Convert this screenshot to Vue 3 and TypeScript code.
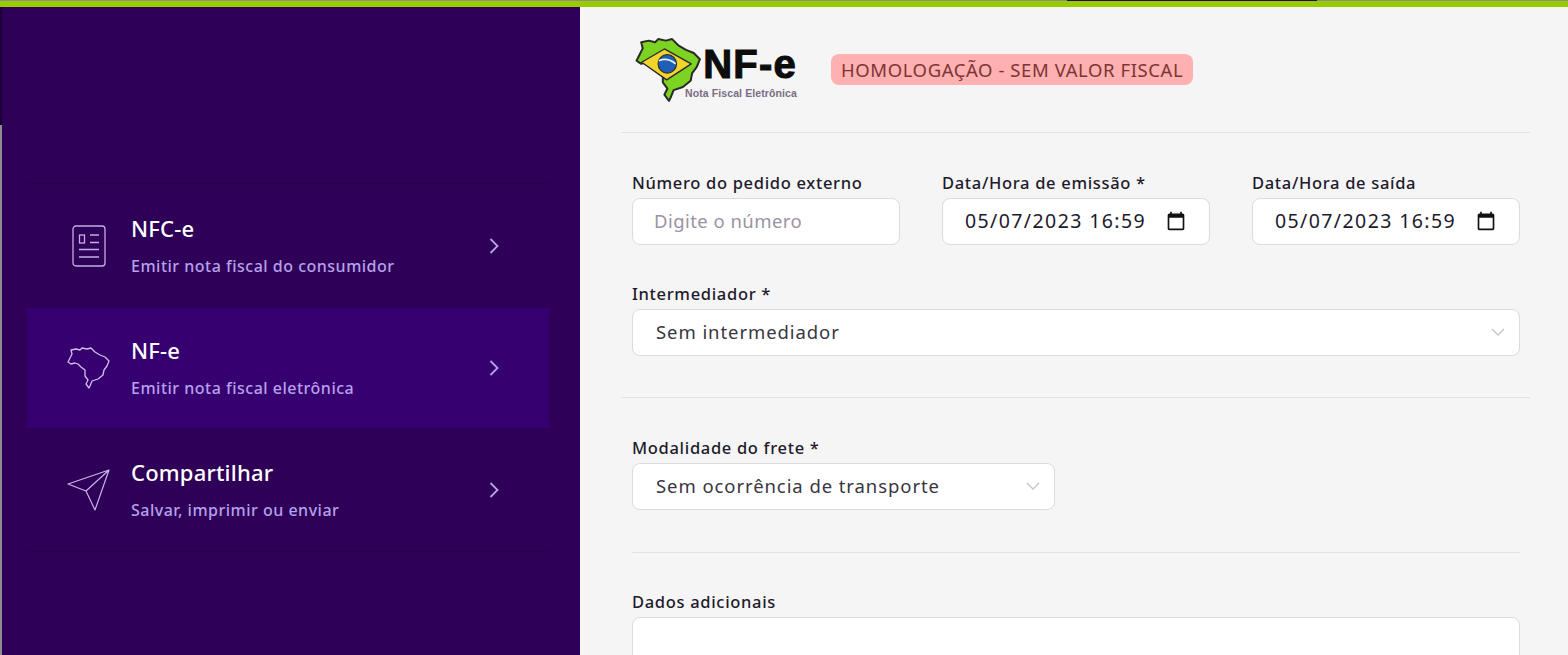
<script setup lang="ts">
interface NavItem {
  title: string;
  sub: string;
  icon: "doc" | "map" | "send";
  active?: boolean;
}

const navItems: NavItem[] = [
  { title: "NFC-e", sub: "Emitir nota fiscal do consumidor", icon: "doc" },
  { title: "NF-e", sub: "Emitir nota fiscal eletrônica", icon: "map", active: true },
  { title: "Compartilhar", sub: "Salvar, imprimir ou enviar", icon: "send" },
];

const brazil =
  "M1 16 L3 12 L5 8 L4 4 L9 3 L13 4 L15 2 L20 3 L24 2 L28 6 L33 9 L38 11 L42 15 L40 20 L37 24 L36 29 L31 33 L25 35 L23 40 L22 42 L19 38 L21 34 L18 30 L18 24 L14 21 L11 18 L8 17 L4 18 Z";
</script>

<template>
  <div class="page">
    <div class="top-strip"><span class="top-strip__seg" /></div>
    <div class="top-bar" />
    <div class="layout">
      <div class="edge"><span class="edge__dark" /></div>

      <aside class="sidebar">
        <nav class="nav">
          <a v-for="item in navItems" :key="item.title" :class="['nav__item', { 'nav__item--active': item.active }]">
            <span class="nav__icon">
              <svg v-if="item.icon === 'doc'" width="34" height="42" viewBox="0 0 34 42" fill="none" stroke="#c3aee6" stroke-width="1.3">
                <rect x="1" y="1" width="32" height="40" rx="3" />
                <rect x="7.5" y="10" width="5" height="8" />
                <path d="M18 10h9M18 17.5h9M7 24.500h20M7 32h20" />
              </svg>
              <svg v-else-if="item.icon === 'map'" width="44" height="44" viewBox="0 0 44 44" fill="none" stroke="#d0bdec" stroke-width="1.3" stroke-linejoin="round">
                <path :d="brazil" />
              </svg>
              <svg v-else width="44" height="44" viewBox="0 0 44 44" fill="none" stroke="#c9b6ea" stroke-width="1.2" stroke-linejoin="round">
                <path d="M42 2 L1 16 L19 23 L28 42 Z M42 2 L19 23" />
              </svg>
            </span>
            <span class="nav__text">
              <span class="nav__title">{{ item.title }}</span>
              <span class="nav__sub">{{ item.sub }}</span>
            </span>
            <svg class="nav__chevron" width="10" height="16" viewBox="0 0 10 16" fill="none" stroke="#b9a3e6" stroke-width="1.8">
              <path d="M1.500 1 L8.500 8 L1.500 15" />
            </svg>
          </a>
        </nav>
      </aside>

      <main class="main">
        <header class="head">
          <div class="logo">
            <svg class="logo__map" width="68" height="68" viewBox="0 0 44 44" stroke-linejoin="round">
              <path :d="brazil" fill="#7dd321" stroke="#2a2a2a" stroke-width="1.300" />
              <path d="M4.300 17 L19 8.400 L36.400 18 L20.500 28.400 Z" fill="#f2d42c" stroke="#2a2a2a" stroke-width="0.900" />
              <circle cx="20.900" cy="18" r="6" fill="#1e5fb4" stroke="#2a2a2a" stroke-width="0.700" />
              <path d="M15.500 16 Q21 13.500 26.300 18" fill="none" stroke="#e8f0ff" stroke-width="1" />
            </svg>
            <div class="logo__text">
              <span class="logo__name">NF-e</span>
              <span class="logo__sub">Nota Fiscal Eletrônica</span>
            </div>
          </div>
          <span class="badge">HOMOLOGAÇÃO - SEM VALOR FISCAL</span>
        </header>

        <section class="form-section form-section--first">
          <div class="row-3">
            <label class="field">
              <span class="field__label">Número do pedido externo</span>
              <span class="control control--placeholder">Digite o número</span>
            </label>
            <label class="field">
              <span class="field__label">Data/Hora de emissão *</span>
              <span class="control control--date">
                05/07/2023 16:59
                <svg class="calendar" width="20" height="20" viewBox="0 0 24 24" fill="#111">
                  <path d="M20 3h-1V1h-2v2H7V1H5v2H4c-1.100 0-2 .9-2 2v16c0 1.100.9 2 2 2h16c1.100 0 2-.9 2-2V5c0-1.100-.9-2-2-2zm0 18H4V8h16v13z" />
                </svg>
              </span>
            </label>
            <label class="field">
              <span class="field__label">Data/Hora de saída</span>
              <span class="control control--date">
                05/07/2023 16:59
                <svg class="calendar" width="20" height="20" viewBox="0 0 24 24" fill="#111">
                  <path d="M20 3h-1V1h-2v2H7V1H5v2H4c-1.100 0-2 .9-2 2v16c0 1.100.9 2 2 2h16c1.100 0 2-.9 2-2V5c0-1.100-.9-2-2-2zm0 18H4V8h16v13z" />
                </svg>
              </span>
            </label>
          </div>
          <label class="field field--gap">
            <span class="field__label">Intermediador *</span>
            <span class="control control--select">
              Sem intermediador
              <svg class="caret" width="14" height="8" viewBox="0 0 14 8" fill="none" stroke="#c4c4c4" stroke-width="1.300"><path d="M1 1l6 6 6-6" /></svg>
            </span>
          </label>
        </section>

        <hr class="rule rule--wide" />

        <section class="form-section form-section--freight">
          <label class="field field--half">
            <span class="field__label">Modalidade do frete *</span>
            <span class="control control--select">
              Sem ocorrência de transporte
              <svg class="caret" width="14" height="8" viewBox="0 0 14 8" fill="none" stroke="#c4c4c4" stroke-width="1.300"><path d="M1 1l6 6 6-6" /></svg>
            </span>
          </label>
        </section>

        <hr class="rule" />

        <section class="form-section form-section--notes">
          <label class="field">
            <span class="field__label">Dados adicionais</span>
            <span class="control control--area" />
          </label>
        </section>
      </main>
    </div>
  </div>
</template>

<style>
html,
body {
  overflow: hidden;
}
</style>

<style scoped>
.page {
  display: flex;
  flex-direction: column;
  width: 1568px;
  height: 655px;
  overflow: hidden;
  color: #1f1a2b;
  font-family: "Noto Sans", "Open Sans", sans-serif;
  background: #f5f5f5;
}

.top-strip {
  height: 1px;
  padding-left: 1067px;
  background: #8e8e8e;
}

.top-strip__seg {
  display: block;
  width: 250px;
  height: 1px;
  background: #2e0057;
}

.top-bar {
  height: 6px;
  background: #99cc00;
}

.layout {
  display: flex;
  flex: 1;
  min-height: 0;
}

.edge {
  width: 2px;
  background: #8e8e8e;
}

.edge__dark {
  display: block;
  height: 118px;
  background: #1a0033;
}

.sidebar {
  box-sizing: border-box;
  width: 578px;
  padding: 176px 31px 0 25px;
  background: #2e0057;
}

.nav {
  display: flex;
  flex-direction: column;
  gap: 2px;
  border-top: 1px solid #270049;
  border-bottom: 1px solid #270049;
  padding: 2px 0 1px;
}

.nav__item {
  display: flex;
  align-items: center;
  height: 120px;
  padding: 0 50px 0 40px;
  color: #fff;
}

.nav__item--active {
  background: #370070;
}

.nav__icon {
  display: flex;
  justify-content: center;
  width: 44px;
  margin-right: 20px;
  flex: none;
}

.nav__text {
  display: flex;
  flex: 1;
  flex-direction: column;
  gap: 13px;
}

.nav__title {
  font-size: 22px;
  font-weight: 500;
  line-height: 27px;
  letter-spacing: 0.2px;
}

.nav__sub {
  color: #b7a0ec;
  font-size: 16px;
  font-weight: 500;
  line-height: 22px;
  letter-spacing: 0.5px;
}

.main {
  flex: 1;
  min-width: 0;
  padding: 0 38px 0 41px;
}

.head {
  display: flex;
  align-items: center;
  height: 125px;
  padding: 0 0 0 14px;
  border-bottom: 1px solid #e2e2e2;
}

.logo {
  display: flex;
  align-items: flex-start;
  width: 196px;
}

.logo__map {
  flex: none;
}

.logo__text {
  display: flex;
  flex-direction: column;
  margin-top: 6px;
  margin-left: -18px;
  align-items: flex-end;
}

.logo__name {
  color: #0c0c0c;
  font-family: "Liberation Sans", sans-serif;
  font-size: 40px;
  font-weight: 700;
  line-height: 45px;
  letter-spacing: 1.2px;
  -webkit-text-stroke: 1.1px #0c0c0c;
}

.logo__sub {
  color: #7a6c84;
  font-family: "Liberation Sans", sans-serif;
  font-size: 10.500px;
  font-weight: 700;
  line-height: 12px;
  letter-spacing: 0.1px;
  white-space: nowrap;
}

.badge {
  padding: 0 10px;
  color: #7c3535;
  font-size: 18.500px;
  line-height: 31px;
  letter-spacing: 0.58px;
  white-space: nowrap;
  background: #ffb0b0;
  border-radius: 8px;
}

.form-section {
  padding: 0 10px 0 11px;
}

.form-section--first {
  padding-top: 39px;
  padding-bottom: 41px;
}

.form-section--freight {
  padding-top: 39px;
  padding-bottom: 42px;
}

.form-section--notes {
  padding-top: 38px;
}

.row-3 {
  display: grid;
  grid-template-columns: repeat(3, 268px);
  column-gap: 42px;
}

.field {
  display: flex;
  flex-direction: column;
}

.field--gap {
  margin-top: 38px;
}

.field--half {
  width: 423px;
}

.field__label {
  height: 26px;
  font-size: 16.500px;
  font-weight: 500;
  line-height: 22px;
  letter-spacing: 0.68px;
  white-space: nowrap;
}

.control {
  display: flex;
  align-items: center;
  box-sizing: border-box;
  height: 47px;
  padding-bottom: 2px;
  border: 1px solid #dcdcdc;
  border-radius: 8px;
  background: #fff;
  font-size: 18.500px;
}

.control--placeholder {
  padding-left: 21px;
  color: #9a93a3;
  letter-spacing: 0.45px;
}

.control--date {
  justify-content: space-between;
  padding-right: 23px;
  padding-left: 22px;
  color: #201a2c;
  font-size: 19.500px;
  letter-spacing: 1.4px;
}

.control--select {
  justify-content: space-between;
  padding-right: 14px;
  padding-left: 23px;
  color: #3a3542;
  letter-spacing: 0.92px;
}

.control--area {
  height: 80px;
}

.rule {
  height: 1px;
  margin: 0 10px 0 11px;
  background: #e2e2e2;
  border: 0;
}

.rule--wide {
  margin: 0;
}
</style>
